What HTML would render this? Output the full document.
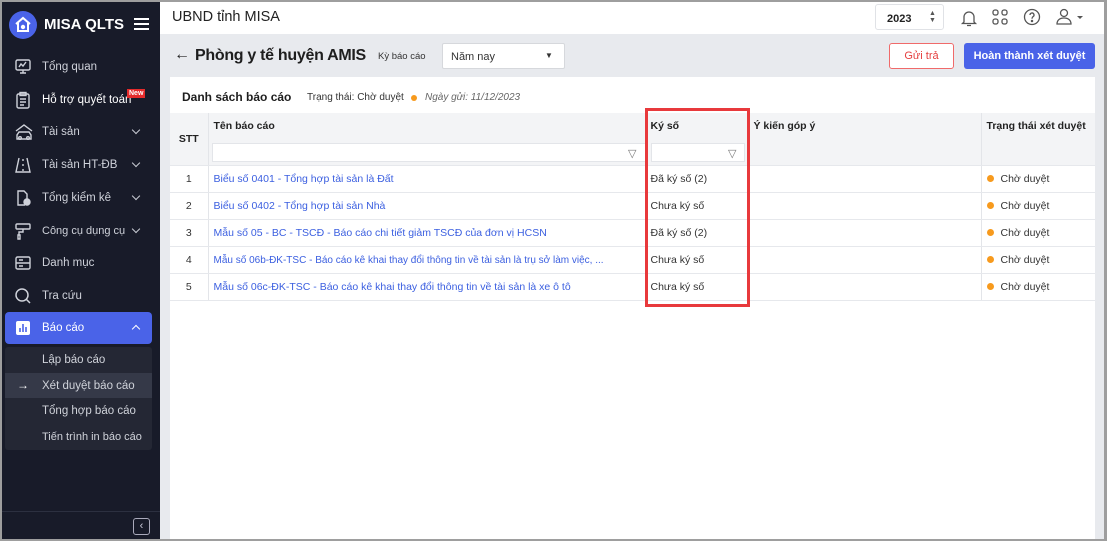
<!DOCTYPE html>
<html><head><meta charset="utf-8"><style>
*{box-sizing:border-box;margin:0;padding:0}
body{width:1107px;height:541px;overflow:hidden;font-family:"Liberation Sans",Arial,sans-serif;background:#9e9e9e;position:relative;white-space:nowrap}
.frame{position:absolute;left:2px;top:2px;width:1102px;height:537px;background:#e8eaee;overflow:hidden}
.side{position:absolute;left:0;top:0;width:158px;height:537px;background:#181b29;color:#d6d8de}
.abs{position:absolute}
.mi{position:absolute;left:0;width:158px;height:32px;font-size:11.5px;color:#cfd2da;display:flex;align-items:center}
.mi span{position:absolute;left:40px}
.mi svg{position:absolute;left:12px}
.chev{position:absolute;left:131px;width:6px;height:6px;border-right:1.6px solid #c8cbd3;border-bottom:1.6px solid #c8cbd3;transform:rotate(45deg)}
.sub{position:absolute;left:40px;font-size:11.5px;color:#d0d3da}
.top{position:absolute;left:158px;top:0;right:0;height:32px;background:#fff}
.card{position:absolute;left:168px;top:75px;width:925px;height:470px;background:#fff}
table{border-collapse:collapse;position:absolute;left:0;top:36px;width:925px;font-size:10.5px;table-layout:fixed}
td,th{border-bottom:1px solid #e6e8ec;height:27px;padding:0 5px;text-align:left;color:#333;font-weight:normal;overflow:hidden;white-space:nowrap}
th{background:#f3f4f6;font-weight:bold;color:#222;vertical-align:top;padding-top:7px}
.vl{border-right:1px solid #e3e5e9}
a{color:#3b5fe0;text-decoration:none}
.dot{display:inline-block;width:7px;height:7px;border-radius:50%;background:#f79a1d;margin-right:7px}
.fin{position:absolute;height:19px;background:#fff;border:1px solid #e3e5e9}
</style></head><body>
<div class="frame">
<div class="side">
 <div class="abs" style="left:7px;top:9px;width:28px;height:28px;border-radius:50%;background:#4a63e8"></div>
 <svg class="abs" style="left:12px;top:14px" width="18" height="17" viewBox="0 0 18 17"><path d="M2 8 L9 2 L16 8 M4 7 V15 H14 V7" fill="none" stroke="#fff" stroke-width="2"/><circle cx="9" cy="11" r="2.2" fill="#fff"/></svg>
 <div class="abs" style="left:42px;top:14px;font-size:15px;font-weight:bold;color:#fff">MISA QLTS</div>
 <div class="abs" style="left:132px;top:16px;width:15px;height:2px;background:#fff;box-shadow:0 5px 0 #fff,0 10px 0 #fff"></div>
 <div class="mi" style="top:49px"><svg width="18" height="18" viewBox="0 0 18 18" fill="none" stroke="#cfd2da" stroke-width="1.4"><rect x="2" y="2" width="14" height="10" rx="1.5"/><path d="M9 12v3M6 15h6M5 9l2-3 2 2 3-4"/></svg><span>Tổng quan</span></div>
 <div class="mi" style="top:82px"><svg width="18" height="18" viewBox="0 0 18 18" fill="none" stroke="#cfd2da" stroke-width="1.4"><rect x="3" y="3" width="12" height="14" rx="1.5"/><rect x="6" y="1.5" width="6" height="3"/><path d="M6 8h6M6 11h6M6 14h4"/></svg><span style="color:#fff">Hỗ trợ quyết toán</span><div class="abs" style="left:125px;top:5px;background:#e52b2b;color:#fff;font-size:7px;font-weight:bold;padding:0 2px;line-height:9px">New</div></div>
 <div class="mi" style="top:114px"><svg width="20" height="18" viewBox="0 0 20 18" fill="none" stroke="#cfd2da" stroke-width="1.4"><path d="M2 8l8-6 8 6M3 16h14v-4l-2-3H5l-2 3z"/><circle cx="6" cy="15" r="1.3"/><circle cx="14" cy="15" r="1.3"/></svg><span>Tài sản</span><i class="chev" style="top:11px"></i></div>
 <div class="mi" style="top:147px"><svg width="18" height="18" viewBox="0 0 18 18" fill="none" stroke="#cfd2da" stroke-width="1.4"><path d="M5 2L2 16h14L13 2M9 3v2M9 8v2M9 13v2"/></svg><span>Tài sản HT-ĐB</span><i class="chev" style="top:11px"></i></div>
 <div class="mi" style="top:180px"><svg width="18" height="18" viewBox="0 0 18 18" fill="none" stroke="#cfd2da" stroke-width="1.4"><path d="M11 16H4V2h6l3 3v5"/><circle cx="13" cy="13" r="3" fill="#cfd2da"/></svg><span>Tổng kiểm kê</span><i class="chev" style="top:11px"></i></div>
 <div class="mi" style="top:213px"><svg width="18" height="18" viewBox="0 0 18 18" fill="none" stroke="#cfd2da" stroke-width="1.4"><rect x="2" y="2" width="14" height="5" rx="1"/><path d="M9 7v3H5v3M4 13h2v4H4z"/></svg><span style="font-size:11px">Công cụ dụng cụ</span><i class="chev" style="top:11px"></i></div>
 <div class="mi" style="top:245px"><svg width="18" height="18" viewBox="0 0 18 18" fill="none" stroke="#cfd2da" stroke-width="1.4"><rect x="2" y="3" width="14" height="12" rx="1.5"/><path d="M2 9h14M5 6h4M5 12h4"/></svg><span>Danh mục</span></div>
 <div class="mi" style="top:278px"><svg width="18" height="18" viewBox="0 0 18 18" fill="none" stroke="#cfd2da" stroke-width="1.5"><circle cx="8" cy="8" r="6"/><path d="M12.5 12.5L16 16"/></svg><span>Tra cứu</span></div>
 <div class="abs" style="left:3px;top:310px;width:147px;height:32px;background:#4a63e8;border-radius:4px"></div>
 <div class="mi" style="top:310px"><svg width="18" height="18" viewBox="0 0 18 18"><rect x="2" y="2" width="14" height="14" rx="2" fill="#fff"/><path d="M6 13V9M9 13V5M12 13V8" stroke="#4a63e8" stroke-width="1.6"/></svg><span style="color:#fff">Báo cáo</span><i class="chev" style="top:14px;transform:rotate(225deg);border-color:#fff"></i></div>
 <div class="abs" style="left:3px;top:345px;width:147px;height:103px;background:#242734;border-radius:3px"></div>
 <div class="abs" style="left:3px;top:371px;width:147px;height:25px;background:#353948"></div>
 <div class="sub" style="top:352px">Lập báo cáo</div>
 <div class="abs" style="left:15px;top:376px;color:#fff;font-size:12px">→</div>
 <div class="sub" style="top:378px">Xét duyệt báo cáo</div>
 <div class="sub" style="top:403px">Tổng hợp báo cáo</div>
 <div class="sub" style="top:429px;font-size:11px">Tiến trình in báo cáo</div>
 <div class="abs" style="left:0;top:509px;width:158px;height:1px;background:#2c3040"></div>
 <div class="abs" style="left:131px;top:516px;width:17px;height:17px;border:1px solid #aab;border-radius:3px;color:#ccd;font-size:11px;line-height:14px;text-align:center">‹</div>
</div>
<div class="top">
 <div class="abs" style="left:12px;top:7px;font-size:14.5px;color:#222">UBND tỉnh MISA</div>
 <div class="abs" style="left:715px;top:2px;width:69px;height:26px;border:1px solid #e0e2e6;border-radius:3px;font-size:11px;font-weight:bold;color:#222;padding:8px 0 0 11px">2023<span class="abs" style="left:53px;top:5px;font-size:7px;line-height:7px;color:#555">▲<br>▼</span></div>
 <svg class="abs" style="left:799px;top:6px" width="20" height="20" viewBox="0 0 20 20" fill="none" stroke="#555" stroke-width="1.3"><path d="M5 14V9a5 5 0 0110 0v5l1.5 1.5h-13zM8 17.5h4"/></svg>
 <svg class="abs" style="left:831px;top:6px" width="18" height="18" viewBox="0 0 18 18" fill="none" stroke="#555" stroke-width="1.3"><rect x="2" y="2" width="5" height="5" rx="2"/><rect x="11" y="2" width="5" height="5" rx="2"/><rect x="2" y="11" width="5" height="5" rx="2"/><rect x="11" y="11" width="5" height="5" rx="2"/></svg>
 <svg class="abs" style="left:863px;top:6px" width="18" height="18" viewBox="0 0 18 18" fill="none" stroke="#555" stroke-width="1.3"><circle cx="9" cy="9" r="7.5"/><path d="M7 7a2 2 0 113 1.7c-.8.5-1 1-1 2"/><circle cx="9" cy="13" r=".6" fill="#555"/></svg>
 <svg class="abs" style="left:895px;top:5px" width="30" height="20" viewBox="0 0 30 20" fill="none" stroke="#555" stroke-width="1.3"><circle cx="9" cy="6" r="3.5"/><path d="M2 17c0-4 3-6 7-6s7 2 7 6z"/><path d="M22 9l3 3 3-3z" fill="#555" stroke="none"/></svg>
</div>
<div class="abs" style="left:172px;top:44px;font-size:16px;color:#222">←</div>
<div class="abs" style="left:193px;top:45px;font-size:16px;font-weight:bold;color:#1e1e1e;letter-spacing:-0.3px">Phòng y tế huyện AMIS</div>
<div class="abs" style="left:376px;top:49px;font-size:9.5px;color:#333">Kỳ báo cáo</div>
<div class="abs" style="left:440px;top:41px;width:123px;height:26px;background:#fff;border:1px solid #d6d8dc;border-radius:2px;font-size:11px;color:#333;padding:7px 0 0 8px">Năm nay<span class="abs" style="left:102px;top:7px;font-size:8px">▼</span></div>
<div class="abs" style="left:887px;top:41px;width:65px;height:26px;background:#fff;border:1px solid #f06a6a;border-radius:3px;color:#e53e3e;font-size:11px;text-align:center;line-height:24px">Gửi trả</div>
<div class="abs" style="left:962px;top:41px;width:131px;height:26px;background:#4a63e8;border-radius:3px;color:#fff;font-size:11px;font-weight:bold;text-align:center;line-height:26px">Hoàn thành xét duyệt</div>
<div class="card">
 <div class="abs" style="left:12px;top:13px;font-size:12px;font-weight:bold;color:#1e1e1e">Danh sách báo cáo</div>
 <div class="abs" style="left:137px;top:15px;font-size:10px;color:#333">Trạng thái: Chờ duyệt</div>
 <div class="abs" style="left:241px;top:18px;width:6px;height:6px;border-radius:50%;background:#f79a1d"></div>
 <div class="abs" style="left:255px;top:15px;font-size:10px;color:#666;font-style:italic">Ngày gửi: 11/12/2023</div>
 <table>
  <colgroup><col style="width:38px"><col style="width:437px"><col style="width:103px"><col style="width:233px"><col></colgroup>
  <tr style="height:52px"><th class="vl" style="vertical-align:middle;padding-top:0;text-align:center">STT</th><th class="vl">Tên báo cáo</th><th class="vl">Ký số</th><th class="vl">Ý kiến góp ý</th><th>Trạng thái xét duyệt</th></tr>
  <tr><td class="vl" style="text-align:center">1</td><td class="vl"><a>Biểu số 0401 - Tổng hợp tài sản là Đất</a></td><td class="vl">Đã ký số (2)</td><td class="vl"></td><td><i class="dot"></i>Chờ duyệt</td></tr>
  <tr><td class="vl" style="text-align:center">2</td><td class="vl"><a>Biểu số 0402 - Tổng hợp tài sản Nhà</a></td><td class="vl">Chưa ký số</td><td class="vl"></td><td><i class="dot"></i>Chờ duyệt</td></tr>
  <tr><td class="vl" style="text-align:center">3</td><td class="vl"><a>Mẫu số 05 - BC - TSCĐ - Báo cáo chi tiết giảm TSCĐ của đơn vị HCSN</a></td><td class="vl">Đã ký số (2)</td><td class="vl"></td><td><i class="dot"></i>Chờ duyệt</td></tr>
  <tr><td class="vl" style="text-align:center">4</td><td class="vl"><a style="font-size:10px">Mẫu số 06b-ĐK-TSC - Báo cáo kê khai thay đổi thông tin về tài sản là trụ sở làm việc, ...</a></td><td class="vl">Chưa ký số</td><td class="vl"></td><td><i class="dot"></i>Chờ duyệt</td></tr>
  <tr><td class="vl" style="text-align:center">5</td><td class="vl"><a>Mẫu số 06c-ĐK-TSC - Báo cáo kê khai thay đổi thông tin về tài sản là xe ô tô</a></td><td class="vl">Chưa ký số</td><td class="vl"></td><td><i class="dot"></i>Chờ duyệt</td></tr>
 </table>
 <div class="fin" style="left:42px;top:66px;width:434px"></div>
 <div class="abs" style="left:458px;top:70px;color:#777;font-size:11px">▽</div>
 <div class="fin" style="left:481px;top:66px;width:94px"></div>
 <div class="abs" style="left:558px;top:70px;color:#777;font-size:11px">▽</div>
 <div class="abs" style="left:475px;top:31px;width:105px;height:199px;border:3px solid #e8393c"></div>
</div>
</div>
</body></html>
